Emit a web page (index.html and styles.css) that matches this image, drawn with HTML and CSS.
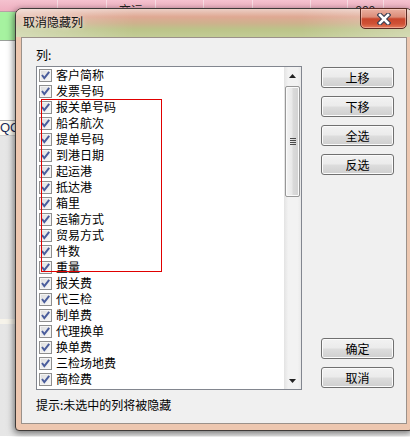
FILE: index.html
```html
<!DOCTYPE html>
<html lang="zh-CN">
<head>
    <meta charset="UTF-8">
    <title>取消隐藏列</title>
    <link rel="stylesheet" href="styles.css">
</head>
<body>
    <div class="app">
        <div class="app-head">
            <div class="cell" style="width: 57px"></div>
            <div class="cell" style="width: 48px"></div>
            <div class="cell" style="width: 48px">交运</div>
            <div class="cell" style="width: 47px"></div>
            <div class="cell" style="width: 48px"></div>
            <div class="cell" style="width: 57px"></div>
            <div class="cell" style="width: 36px"></div>
            <div class="cell" style="width: 35px">999</div>
            <div class="cell" style="width: 30px"></div>
        </div>
        <div class="app-row green"></div>
        <div class="app-row blank"></div>
        <div class="app-row qc">QC</div>
        <div class="app-panel">
            <div class="panel-line"></div>
        </div>
    </div>

    <div class="dialog">
        <div class="titlebar">
            <span class="title">取消隐藏列</span>
            <div class="close">
                <svg width="14" height="12" viewBox="0 0 14 12">
                    <path d="M3 2 L11 10 M11 2 L3 10" stroke="#3b3f52" stroke-width="4.8" stroke-linecap="square"/>
                    <path d="M3 2 L11 10 M11 2 L3 10" stroke="#fff" stroke-width="2.6" stroke-linecap="square"/>
                </svg>
            </div>
        </div>
        <div class="client">
            <div class="main">
                <div class="left">
                    <div class="label">列:</div>
                    <div class="listbox">
                        <ul class="items" id="items"></ul>
                        <div class="scrollbar">
                            <div class="sb-btn">
                                <svg width="7" height="4" viewBox="0 0 7 4"><path d="M0 4 L3.5 0 L7 4 Z" fill="#222"/></svg>
                            </div>
                            <div class="sb-track">
                                <div class="thumb">
                                    <div class="grip"></div>
                                </div>
                            </div>
                            <div class="sb-btn">
                                <svg width="7" height="4" viewBox="0 0 7 4"><path d="M0 0 L7 0 L3.5 4 Z" fill="#222"/></svg>
                            </div>
                        </div>
                        <div class="mark"></div>
                    </div>
                </div>
                <div class="buttons">
                    <div class="group">
                        <button class="btn">上移</button>
                        <button class="btn">下移</button>
                        <button class="btn">全选</button>
                        <button class="btn">反选</button>
                    </div>
                    <div class="group">
                        <button class="btn">确定</button>
                        <button class="btn">取消</button>
                    </div>
                </div>
            </div>
            <div class="hint">提示:未选中的列将被隐藏</div>
        </div>
    </div>

    <script>
        const columns = [
            '客户简称', '发票号码', '报关单号码', '船名航次', '提单号码',
            '到港日期', '起运港', '抵达港', '箱里', '运输方式',
            '贸易方式', '件数', '重量', '报关费', '代三检',
            '制单费', '代理换单', '换单费', '三检场地费', '商检费'
        ];

        const check = '<svg width="11" height="11" viewBox="0 0 11 11">' +
            '<path d="M2 5 L4.3 8 L9.2 1.8" fill="none" stroke="#4a5d9c" stroke-width="2"/></svg>';

        const list = document.getElementById('items');
        columns.forEach(function (name) {
            const li = document.createElement('li');
            li.innerHTML = '<span class="box">' + check + '</span><span class="name">' + name + '</span>';
            list.appendChild(li);
        });
    </script>
</body>
</html>
```

FILE: styles.css
```css
body {
    margin: 0;
    width: 410px;
    height: 437px;
    overflow: hidden;
    position: relative;
    font-family: "Noto Sans CJK SC", "Liberation Sans", sans-serif;
    font-size: 12px;
    background: #fff;
}

/* application behind the dialog */
.app-head {
    display: flex;
    height: 11px;
    background: linear-gradient(#f5c2cf, #efafc0);
    border-bottom: 1px solid #b9a0a6;
}
.app-head .cell {
    flex: none;
    border-right: 1px solid #f9dde4;
    overflow: hidden;
    text-align: center;
    line-height: 20px;
    color: #222;
}
.app-row.green {
    height: 28px;
    background: #a6f2a0;
    border-bottom: 1px solid #9aa09a;
}
.app-row.blank {
    height: 79px;
    background: #fff;
}
.app-row.qc {
    height: 14px;
    line-height: 14px;
    border-top: 1px solid #b0b0b0;
    border-bottom: 1px solid #d0d0d0;
    font-family: "Liberation Sans", sans-serif;
    font-size: 13px;
    color: #1a2a5a;
    background: #fffdf4;
}
.app-panel {
    height: 300px;
    box-sizing: border-box;
    background: linear-gradient(to right, #e6e6e6, #efefef);
    padding-top: 183px;
}
.panel-line {
    height: 5px;
    background: #f6f3ea;
}

/* dialog window */
.dialog {
    position: absolute;
    left: 15px;
    top: 8px;
    width: 396px;
    height: 421px;
    border: 1px solid #3e3a38;
    border-radius: 7px 7px 4px 4px;
    background: #edc7b0;
    box-shadow: -1px 2px 7px rgba(0, 0, 0, 0.55);
    display: flex;
    flex-direction: column;
}
.titlebar {
    position: relative;
    height: 28px;
    flex: none;
    display: flex;
    align-items: center;
    padding: 0 0 3px 7px;
    box-sizing: border-box;
    border-radius: 6px 6px 0 0;
    background:
        linear-gradient(to right, rgba(255, 255, 255, 0.35), rgba(255, 255, 255, 0) 30%, rgba(255, 255, 255, 0) 72%, rgba(255, 255, 255, 0.3)),
        linear-gradient(#eccfc6 0%, #dfa893 28%, #cdb28d 52%, #bcc389 72%, #c2cc95 100%);
}
.title {
    color: #111;
    text-shadow: 0 0 5px rgba(255, 255, 255, 0.7);
}
.close {
    position: absolute;
    top: -1px;
    right: 5px;
    width: 47px;
    height: 21px;
    box-sizing: border-box;
    border: 1px solid #5a2a22;
    border-radius: 0 0 5px 5px;
    background: linear-gradient(#eab1a2 0%, #dc8c78 42%, #c9462c 52%, #cf5236 78%, #e57c5c 100%);
    box-shadow: inset 0 0 0 1px rgba(255, 220, 210, 0.45);
    display: flex;
    align-items: center;
    justify-content: center;
}

.client {
    flex: none;
    height: 387px;
    margin: 0 5px;
    box-sizing: border-box;
    border: 1px solid #9b918a;
    background: #f0f0f0;
    padding: 10px 0 0 14px;
}
.main {
    display: flex;
    gap: 19px;
}
.label {
    height: 14px;
    line-height: 14px;
    margin-bottom: 4px;
}
.listbox {
    position: relative;
    width: 266px;
    height: 324px;
    box-sizing: border-box;
    border: 1px solid #82868f;
    background: #fff;
    display: flex;
}
.items {
    list-style: none;
    margin: 0;
    padding: 0;
    flex: 1;
}
.items li {
    height: 16px;
    display: flex;
    align-items: center;
    padding-left: 2px;
}
.box {
    width: 13px;
    height: 13px;
    box-sizing: border-box;
    border: 1px solid #8f8f8f;
    background: linear-gradient(135deg, #dcdcdc, #fbfbfb);
    box-shadow: inset 0 0 0 1px #f4f4f4;
    margin-right: 4px;
    display: flex;
}
.name {
    line-height: 16px;
    color: #000;
}

.scrollbar {
    width: 17px;
    display: flex;
    flex-direction: column;
    background: linear-gradient(to right, #e3e3e3, #f2f2f2 25%, #f2f2f2 80%, #e9e9e9);
}
.sb-btn {
    height: 17px;
    flex: none;
    display: flex;
    align-items: center;
    justify-content: center;
}
.sb-track {
    flex: 1;
    padding-top: 2px;
}
.thumb {
    height: 111px;
    margin: 0 1px;
    box-sizing: border-box;
    border: 1px solid #979797;
    border-radius: 2px;
    background: linear-gradient(to right, #f3f3f3 0%, #e9e9e9 45%, #dadada 55%, #d2d2d2 100%);
    box-shadow: inset 0 0 0 1px #fafafa;
    display: flex;
    align-items: center;
    justify-content: center;
}
.grip {
    width: 6px;
    height: 7px;
    background: repeating-linear-gradient(#4a4a4a 0, #4a4a4a 1px, transparent 1px, transparent 2px);
}
.mark {
    position: absolute;
    left: 4px;
    top: 32px;
    width: 121px;
    height: 173px;
    box-sizing: border-box;
    border: 1px solid #e00000;
    pointer-events: none;
}

.buttons {
    display: flex;
    flex-direction: column;
    justify-content: space-between;
    padding: 19px 0 2px;
}
.group {
    display: flex;
    flex-direction: column;
    gap: 8px;
}
.btn {
    width: 73px;
    height: 21px;
    padding: 0;
    border: 1px solid #707070;
    border-radius: 3px;
    background: linear-gradient(#f2f2f2 0%, #ebebeb 48%, #dddddd 52%, #cfcfcf 100%);
    box-shadow: inset 0 0 0 1px #fbfbfb;
    font-family: inherit;
    font-size: 12px;
    line-height: 19px;
    color: #000;
}
.hint {
    margin-top: 8px;
    line-height: 14px;
}
```
